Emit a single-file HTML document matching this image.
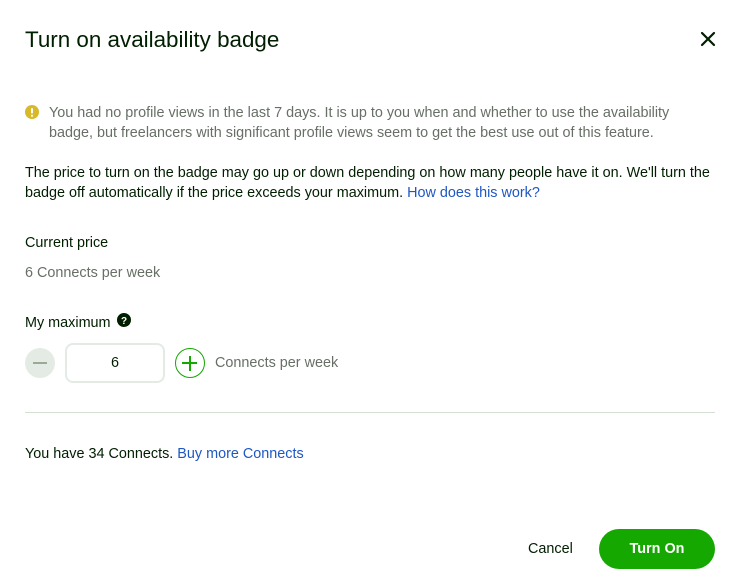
<!DOCTYPE html>
<html><head><meta charset="utf-8"><style>
*{margin:0;padding:0;box-sizing:border-box}
body{width:739px;height:586px;background:#fff;font-family:"Liberation Sans",sans-serif;color:#001e00;position:relative;overflow:hidden;font-size:14.4px}
.a{position:absolute;white-space:nowrap}
.g{color:#676f66}
.l{color:#1f57c3}
</style></head><body>
<div class="a" style="left:25px;top:27px;font-size:22.4px;color:#001e00">Turn on availability badge</div>
<svg class="a" style="left:700px;top:31px" width="16" height="16" viewBox="0 0 16 16"><path d="M2 2L14 14M14 2L2 14" stroke="#001e00" stroke-width="2.2" stroke-linecap="round"/></svg>
<svg class="a" style="left:25px;top:105px" width="14" height="14" viewBox="0 0 14 14"><circle cx="7" cy="7" r="7" fill="#d8b92a"/><rect x="6" y="3" width="2" height="5.5" rx="1" fill="#fff"/><circle cx="7" cy="10.7" r="1.1" fill="#fff"/></svg>
<div class="a g" style="left:49px;top:103px;line-height:20px">You had no profile views in the last 7 days. It is up to you when and whether to use the availability<br>badge, but freelancers with significant profile views seem to get the best use out of this feature.</div>
<div class="a" style="left:25px;top:163px;line-height:20px">The price to turn on the badge may go up or down depending on how many people have it on. We'll turn the<br>badge off automatically if the price exceeds your maximum. <span class="l">How does this work?</span></div>
<div class="a" style="left:25px;top:235px">Current price</div>
<div class="a g" style="left:25px;top:265px">6 Connects per week</div>
<div class="a" style="left:25px;top:315px">My maximum</div>
<svg class="a" style="left:117px;top:313px" width="14" height="14" viewBox="0 0 14 14"><circle cx="7" cy="7" r="7" fill="#001e00"/><text x="7" y="11" font-size="10" font-weight="bold" fill="#fff" text-anchor="middle" font-family="Liberation Sans">?</text></svg>
<div class="a" style="left:25px;top:348px;width:30px;height:30px;border-radius:50%;background:#e4ebe4"><div style="position:absolute;left:8px;top:14px;width:14px;height:2px;background:#9aaa97"></div></div>
<div class="a" style="left:65px;top:343px;width:100px;height:40px;border:2px solid #e4ebe4;border-radius:8px;text-align:center;line-height:37px">6</div>
<div class="a" style="left:175px;top:348px;width:30px;height:30px;border-radius:50%;border:1.5px solid #14a800"><div style="position:absolute;left:6px;top:13px;width:15px;height:2px;background:#14a800"></div><div style="position:absolute;left:12.5px;top:6.5px;width:2px;height:15px;background:#14a800"></div></div>
<div class="a g" style="left:215px;top:355px">Connects per week</div>
<div class="a" style="left:25px;top:412px;width:690px;height:1px;background:#d5e0d5"></div>
<div class="a" style="left:25px;top:446px">You have 34 Connects. <span class="l">Buy more Connects</span></div>
<div class="a" style="left:528px;top:541px">Cancel</div>
<div class="a" style="left:599px;top:529px;width:116px;height:40px;border-radius:20px;background:#14a800;color:#fff;font-weight:bold;text-align:center;line-height:40px">Turn On</div>
</body></html>
